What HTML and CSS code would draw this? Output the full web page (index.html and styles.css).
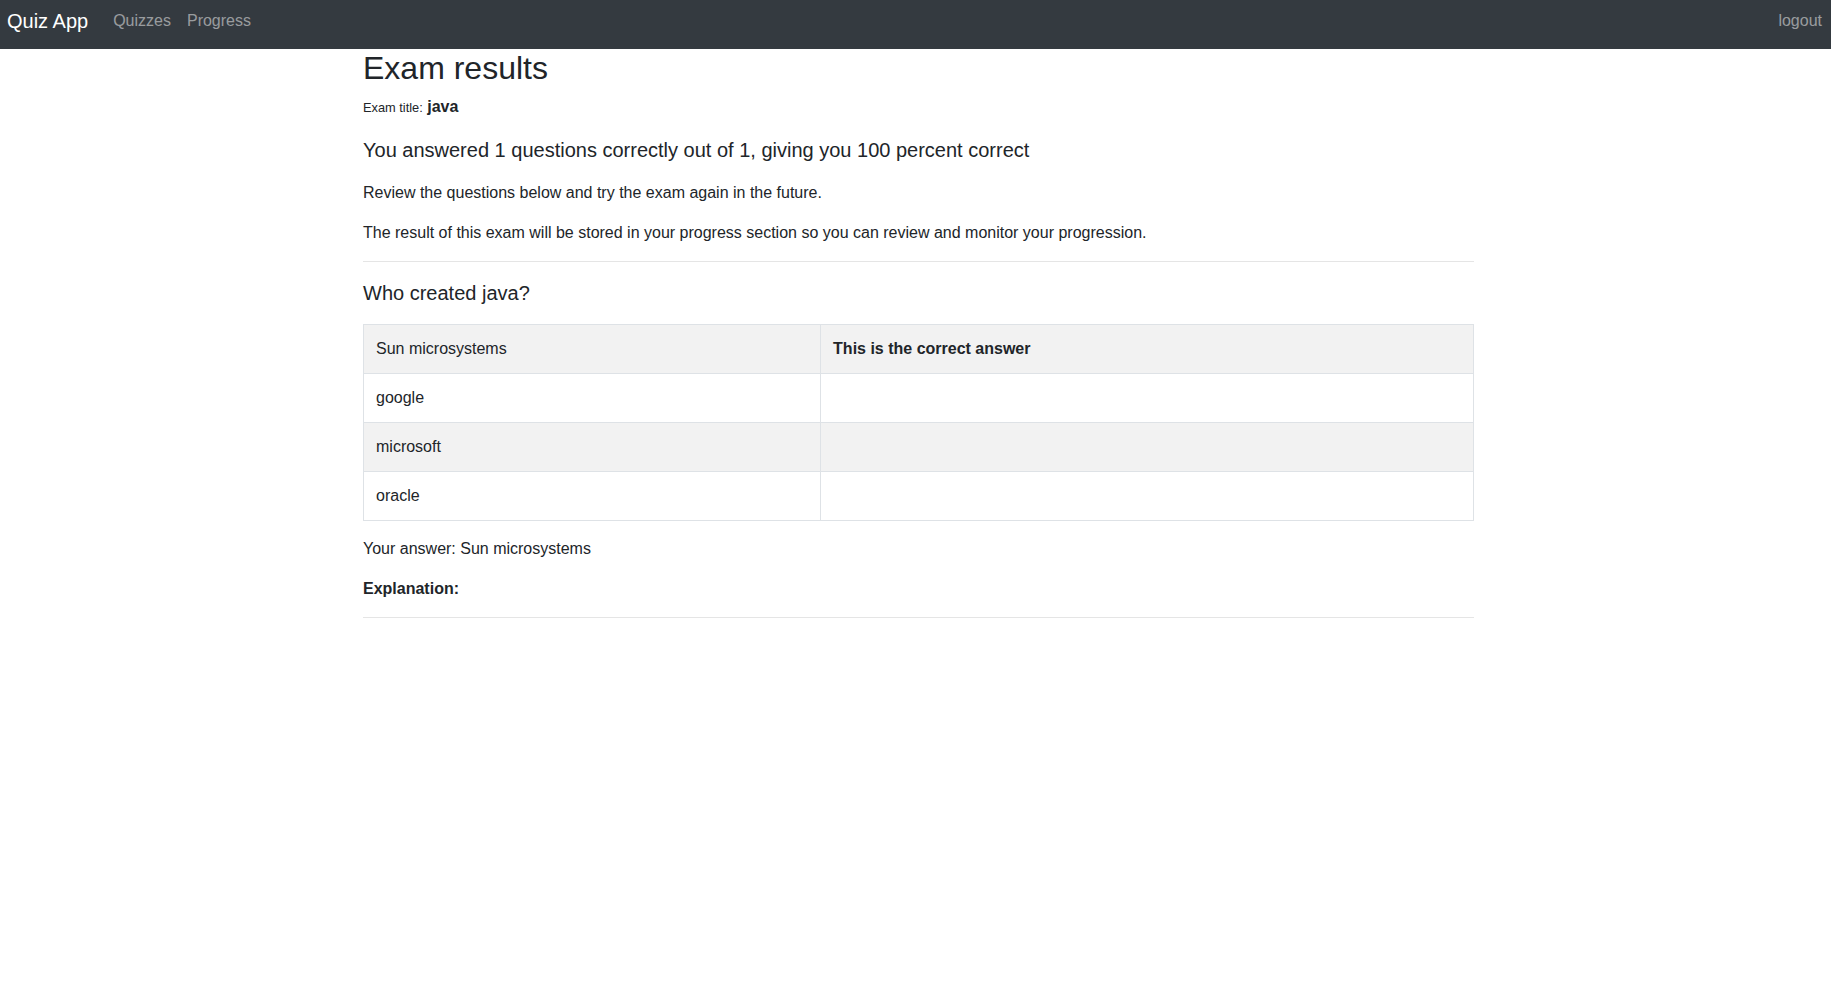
FILE: index.html
```html
<!DOCTYPE html>
<html lang="en">
<head>
<meta charset="utf-8">
<title>Exam results</title>
<link rel="stylesheet" href="styles.css">
</head>
<body>
<nav class="navbar">
  <a class="brand" href="#">Quiz App</a>
  <ul class="nav">
    <li><a class="nav-link" href="#">Quizzes</a></li>
    <li><a class="nav-link" href="#">Progress</a></li>
  </ul>
  <ul class="nav nav-right">
    <li><a class="nav-link" href="#">logout</a></li>
  </ul>
</nav>
<main class="container">
  <h2 class="title">Exam results</h2>
  <p class="exam-title"><small>Exam title:</small> <strong>java</strong></p>
  <p class="lead">You answered 1 questions correctly out of 1, giving you 100 percent correct</p>
  <p>Review the questions below and try the exam again in the future.</p>
  <p>The result of this exam will be stored in your progress section so you can review and monitor your progression.</p>
  <hr class="rule">
  <p class="lead">Who created java?</p>
  <table class="answers">
    <tbody>
      <tr><td>Sun microsystems</td><td class="correct">This is the correct answer</td></tr>
      <tr><td>google</td><td></td></tr>
      <tr><td>microsoft</td><td></td></tr>
      <tr><td>oracle</td><td></td></tr>
    </tbody>
  </table>
  <p>Your answer: Sun microsystems</p>
  <p><strong>Explanation:</strong></p>
  <hr class="rule">
</main>
</body>
</html>
```
FILE: styles.css
```css
* { box-sizing: border-box; }
html, body { margin: 0; padding: 0; }
body {
  font-family: "Liberation Sans", Arial, sans-serif;
  font-size: 16px;
  line-height: 1.5;
  color: #212529;
  background: #fff;
}
.navbar {
  display: flex;
  align-items: flex-start;
  height: 49px;
  padding: 1px 1px 8px 7px;
  background: #343a40;
}
.brand {
  display: inline-block;
  padding: 5px 0;
  margin-right: 17px;
  font-size: 20px;
  line-height: 30px;
  color: #fff;
  text-decoration: none;
  white-space: nowrap;
}
.nav {
  display: flex;
  list-style: none;
  margin: 0;
  padding: 0;
}
.nav-right { margin-left: auto; }
.nav-link {
  display: block;
  padding: 8px;
  line-height: 24px;
  color: rgba(255, 255, 255, 0.5);
  text-decoration: none;
}
.container {
  width: 1117px;
  margin: 0 auto;
  padding-left: 6px;
}
.title {
  margin: 0 0 8px;
  font-size: 32px;
  font-weight: 500;
  line-height: 1.2;
}
p { margin: 0 0 16px; }
.exam-title small { font-size: 80%; font-weight: 400; }
.exam-title strong { font-weight: 700; }
.lead {
  font-size: 20px;
  line-height: 30px;
}
.rule {
  margin: 16px 0;
  border: 0;
  border-top: 1px solid rgba(0, 0, 0, 0.1);
  height: 0;
}
.answers {
  width: 100%;
  margin-bottom: 16px;
  border-collapse: collapse;
  border: 1px solid #dee2e6;
}
.answers td {
  padding: 12px;
  border: 1px solid #dee2e6;
  vertical-align: top;
  line-height: 24px;
}
.answers tr:nth-child(odd) { background: rgba(0, 0, 0, 0.05); }
.correct { font-weight: 700; }
```
